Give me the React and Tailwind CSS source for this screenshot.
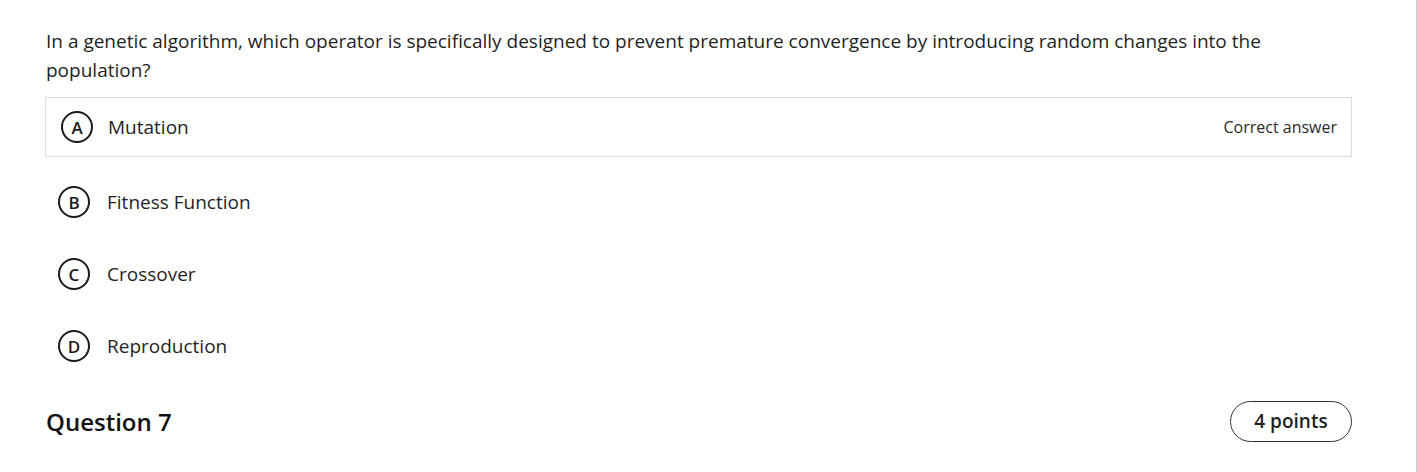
export default function App() {
  const opts = [
    ["B", "Fitness Function"],
    ["C", "Crossover"],
    ["D", "Reproduction"],
  ];
  const Circle = ({ l }) => (
    <span className="flex h-[32px] w-[32px] shrink-0 items-center justify-center rounded-full border-[2.5px] border-[#1a1a1a] text-[17px] font-semibold leading-none text-[#1a1a1a]">
      {l}
    </span>
  );
  return (
    <div className="h-[472px] w-[1417px] border-r border-[#cfcfcf] bg-white" style={{ fontFamily: '"Open Sans", sans-serif' }}>
      <div className="w-[1352px] pl-[46px] pt-[27px] text-[#1f1f1f]">
        <p className="text-[19px] leading-[29px]">
          In a genetic algorithm, which operator is specifically designed to prevent premature convergence by introducing random changes into the population?
        </p>
        <div className="-ml-px mt-[12px] flex h-[60px] items-center border border-[#dcdcdc] pl-[15px] pr-[14px]">
          <Circle l="A" />
          <span className="ml-[15px] text-[19px]">Mutation</span>
          <span className="ml-auto text-[16px] text-[#2a2a2a]">Correct answer</span>
        </div>
        <div className="mt-[15px] flex flex-col gap-[12px]">
          {opts.map(([l, t]) => (
            <div key={l} className="flex h-[60px] items-center pl-[12px]">
              <Circle l={l} />
              <span className="ml-[17px] text-[19px]">{t}</span>
            </div>
          ))}
        </div>
        <div className="mt-[25px] flex items-center justify-between">
          <h2 className="text-[24px] font-semibold text-[#111]">Question 7</h2>
          <span className="flex h-[41px] w-[122px] items-center justify-center rounded-full border-[1.5px] border-[#333] text-[19px] font-semibold text-[#1f1f1f]">
            4 points
          </span>
        </div>
      </div>
    </div>
  );
}
